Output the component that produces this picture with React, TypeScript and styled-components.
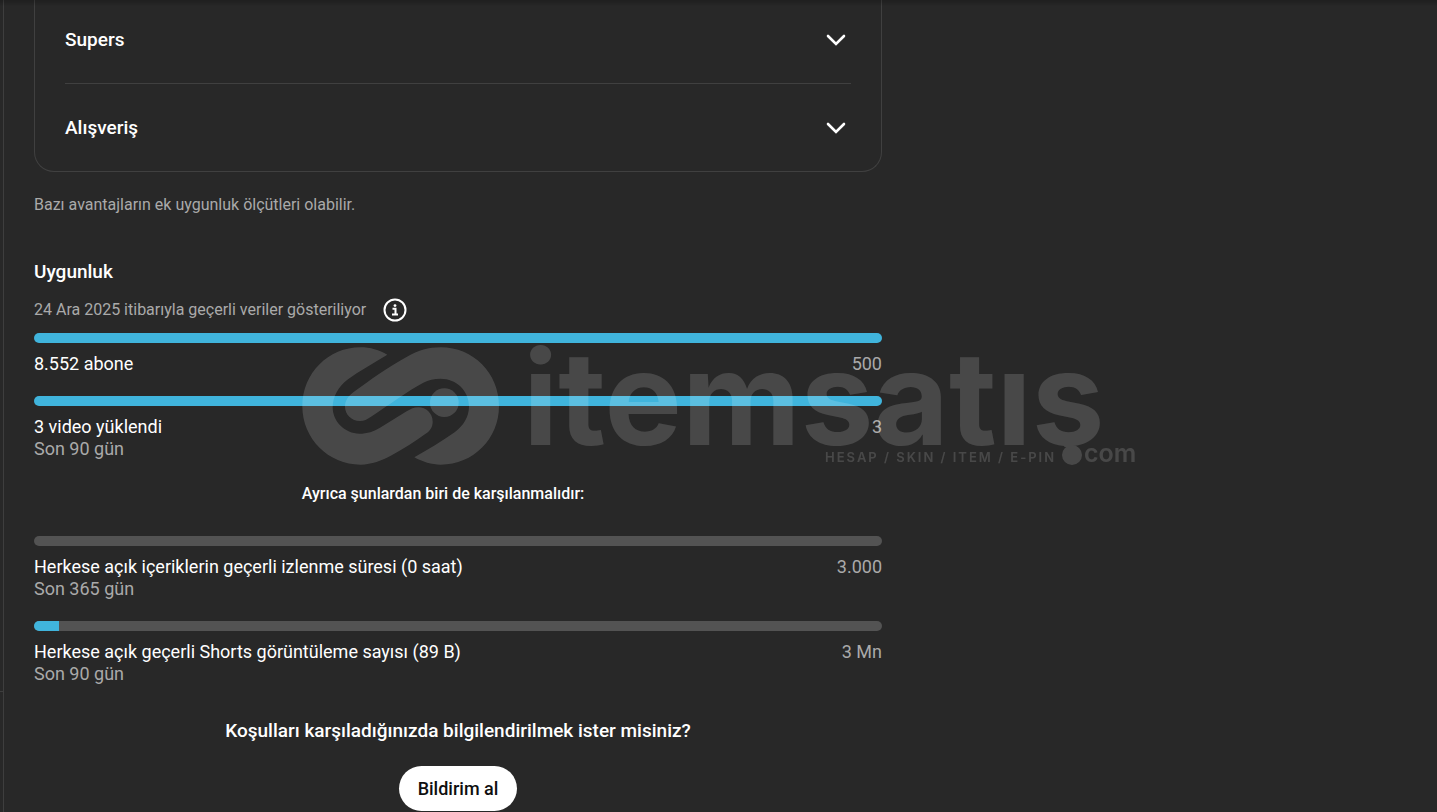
import React from "react";
import styled, { createGlobalStyle } from "styled-components";

const GlobalStyle = createGlobalStyle`
  * { box-sizing: border-box; }
  body {
    margin: 0;
    background: #282828;
    color: #fff;
    font-family: Roboto, "Liberation Sans", sans-serif;
  }
`;

const Shell = styled.div`
  display: flex;
  min-height: 100vh;
  overflow: hidden;
`;

const TopShade = styled.div`
  position: fixed;
  inset: 0 0 auto 0;
  height: 6px;
  background: linear-gradient(rgba(0, 0, 0, 0.22), rgba(0, 0, 0, 0));
  pointer-events: none;
`;

const SideRail = styled.aside`
  display: flex;
  flex-direction: column;
  justify-content: flex-end;
  flex: none;
  width: 4px;
  border-right: 1px solid #3e3e3e;
`;

const RailFooter = styled.div`
  height: 121px;
  border-top: 1px solid #3e3e3e;
`;

const Main = styled.main`
  flex: 1;
  min-width: 0;
  padding: 0 30px;
`;

const Column = styled.div`
  max-width: 848px;
`;

const Card = styled.section`
  margin-top: -4px;
  padding: 0 30px;
  border: 1px solid #404040;
  border-top: 0;
  border-radius: 0 0 20px 20px;
`;

const CardHeading = styled.h3`
  margin: 0;
  & + & {
    border-top: 1px solid #404040;
  }
`;

const AccordionButton = styled.button`
  display: flex;
  align-items: center;
  justify-content: space-between;
  width: 100%;
  height: 87px;
  padding: 0;
  border: 0;
  background: none;
  color: inherit;
  font: 500 19px/24px Roboto, "Liberation Sans", sans-serif;
  text-align: left;
  cursor: pointer;
`;

const ChevronIcon = styled.svg`
  display: block;
  width: 30px;
  height: 30px;
`;

const Note = styled.p`
  margin: 0;
  color: #aaa;
  font-size: 16px;
  line-height: 24px;
`;

const CardNote = styled(Note)`
  margin-top: 21px;
`;

const SectionTitle = styled.h2`
  margin: 43px 0 0;
  font-size: 19px;
  font-weight: 500;
  line-height: 24px;
`;

const DateRow = styled.div`
  display: flex;
  align-items: center;
  gap: 15px;
  margin: 12px 0 9px;
`;

const InfoButton = styled.button`
  display: block;
  padding: 0;
  border: 0;
  background: none;
  color: #fff;
  cursor: pointer;
  svg {
    display: block;
    width: 28px;
    height: 28px;
  }
`;

const StatList = styled.div`
  display: flex;
  flex-direction: column;
  gap: 21px;
`;

const Bar = styled.div`
  height: 10px;
  border-radius: 5px;
  background: #535353;
  overflow: hidden;
`;

const BarFill = styled.div`
  height: 100%;
  background: #40b4dc;
`;

const StatRow = styled.div`
  display: flex;
  justify-content: space-between;
  margin-top: 10px;
  font-size: 18px;
  line-height: 22px;
`;

const Muted = styled.div`
  color: #aaa;
`;

const Requirement = styled.p`
  margin: 22px 0 30px;
  padding-right: 30px;
  font-size: 16px;
  font-weight: 500;
  line-height: 24px;
  text-align: center;
`;

const Prompt = styled.div`
  display: flex;
  flex-direction: column;
  align-items: center;
  gap: 23px;
  margin-top: 34px;
`;

const PromptTitle = styled.h2`
  margin: 0;
  font-size: 19px;
  font-weight: 500;
  line-height: 24px;
`;

const PillButton = styled.button`
  height: 45px;
  padding: 0 19px;
  border: 0;
  border-radius: 23px;
  background: #fff;
  color: #0f0f0f;
  font: 500 18px/24px Roboto, "Liberation Sans", sans-serif;
  cursor: pointer;
`;

const WatermarkLayer = styled.div`
  position: fixed;
  inset: 0;
  display: flex;
  align-items: center;
  justify-content: center;
  pointer-events: none;
`;

const WatermarkArt = styled.svg`
  width: 834px;
  height: 118px;
  overflow: visible;
  opacity: 0.15;
`;

const Wordmark = styled.text`
  font: 700 130px Inter, sans-serif;
`;

const Suffix = styled.text`
  font: 600 25px Inter, sans-serif;
`;

const Tagline = styled.text`
  font: 600 13px Inter, sans-serif;
  letter-spacing: 2px;
`;

const Chevron = () => (
  <ChevronIcon viewBox="0 0 30 30" fill="none" aria-hidden="true">
    <path d="M7 11l8 8 8-8" stroke="#fff" strokeWidth="2.6" strokeLinecap="round" />
  </ChevronIcon>
);

const AccordionItem = ({ title }: { title: string }) => (
  <CardHeading>
    <AccordionButton type="button" aria-expanded={false}>
      {title}
      <Chevron />
    </AccordionButton>
  </CardHeading>
);

type StatProps = { label: string; period?: string; target: string; progress: number };

const Stat = ({ label, period, target, progress }: StatProps) => (
  <div>
    <Bar role="progressbar" aria-label={label} aria-valuenow={progress}>
      <BarFill style={{ width: `${progress}%` }} />
    </Bar>
    <StatRow>
      <div>
        {label}
        {period && <Muted>{period}</Muted>}
      </div>
      <Muted>{target}</Muted>
    </StatRow>
  </div>
);

const Watermark = () => (
  <WatermarkLayer>
    <WatermarkArt viewBox="0 0 834 118" fill="#fff">
      {/* The round dot of ".com" stands in for the cedilla of the last letter. */}
      <clipPath id="above-baseline">
        <rect x="0" y="-20" width="834" height="120" />
      </clipPath>
      <g transform="translate(-12 -17) scale(0.33333)">
        <path d="M292 74C268 60 240 52 212 52C115 52 37 130 37 229C37 326 115 404 212 404C245 404 275 392 305 376C340 357 375 335 409 310C422 300 428 290 428 275C428 250 408 232 385 232C372 232 362 237 350 244L270 293C252 304 232 311 208 311C165 311 128 275 128 232C128 200 145 170 172 149C208 122 250 100 292 74Z" />
        <path d="M373 382C398 396 425 404 452 404C550 404 627 326 627 228C627 130 550 52 452 52C415 52 385 62 355 78C290 114 240 150 190 187C175 198 165 212 165 230C165 253 185 273 210 273C222 273 232 268 242 261C300 222 350 185 400 158C415 150 432 146 452 146C500 146 537 183 537 229C537 262 520 287 495 306C455 335 415 357 373 382Z" />
        <circle cx="463" cy="218" r="43" />
      </g>
      <Wordmark x="221" y="98" clipPath="url(#above-baseline)">itemsatış</Wordmark>
      <Tagline x="523" y="115">HESAP / SKIN / ITEM / E-PIN</Tagline>
      <circle cx="770" cy="108" r="10" />
      <Suffix x="782" y="115">com</Suffix>
    </WatermarkArt>
  </WatermarkLayer>
);

export default function App() {
  return (
    <>
      <GlobalStyle />
      <Shell>
        <SideRail>
          <RailFooter />
        </SideRail>
        <Main>
          <Column>
            <Card>
              <AccordionItem title="Supers" />
              <AccordionItem title="Alışveriş" />
            </Card>
            <CardNote>Bazı avantajların ek uygunluk ölçütleri olabilir.</CardNote>

            <SectionTitle>Uygunluk</SectionTitle>
            <DateRow>
              <Note>24 Ara 2025 itibarıyla geçerli veriler gösteriliyor</Note>
              <InfoButton type="button" aria-label="Bilgi">
                <svg viewBox="0 0 28 28" fill="none">
                  <circle cx="14" cy="14" r="10.5" stroke="currentColor" strokeWidth="2" />
                  <circle cx="14" cy="9.6" r="1.4" fill="currentColor" />
                  <path d="M11.5 12.8h3v5.4M11 18.6h6" stroke="currentColor" strokeWidth="2" />
                </svg>
              </InfoButton>
            </DateRow>
            <StatList>
              <Stat label="8.552 abone" target="500" progress={100} />
              <Stat label="3 video yüklendi" period="Son 90 gün" target="3" progress={100} />
            </StatList>
            <Requirement>Ayrıca şunlardan biri de karşılanmalıdır:</Requirement>
            <StatList>
              <Stat
                label="Herkese açık içeriklerin geçerli izlenme süresi (0 saat)"
                period="Son 365 gün"
                target="3.000"
                progress={0}
              />
              <Stat
                label="Herkese açık geçerli Shorts görüntüleme sayısı (89 B)"
                period="Son 90 gün"
                target="3 Mn"
                progress={3}
              />
            </StatList>
            <Prompt>
              <PromptTitle>Koşulları karşıladığınızda bilgilendirilmek ister misiniz?</PromptTitle>
              <PillButton type="button">Bildirim al</PillButton>
            </Prompt>
          </Column>
        </Main>
      </Shell>
      <TopShade />
      <Watermark />
    </>
  );
}
